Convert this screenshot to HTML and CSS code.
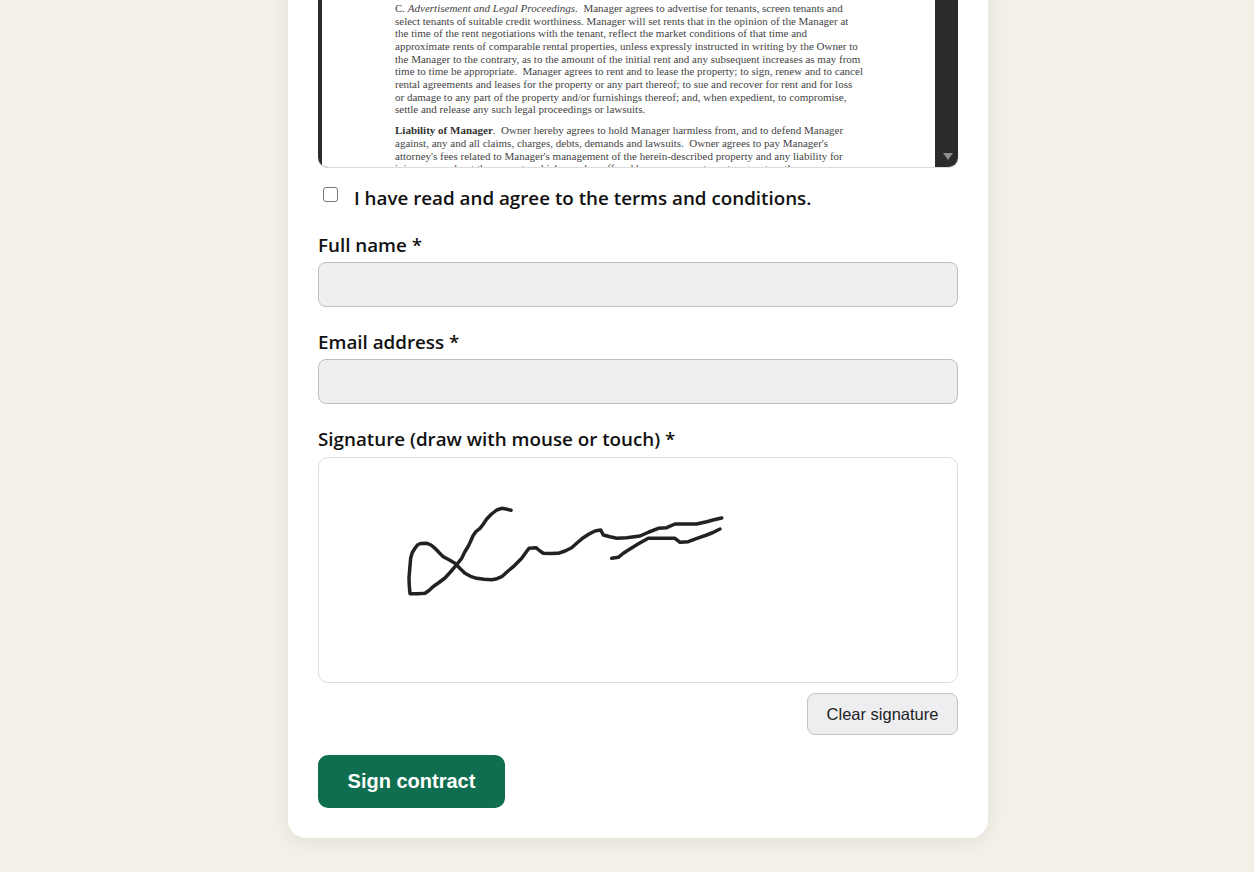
FILE: index.html
```html
<!DOCTYPE html>
<html lang="en">
<head>
    <meta charset="UTF-8">
    <meta name="viewport" content="width=device-width, initial-scale=1.0">
    <title>Sign contract</title>
    <link rel="stylesheet" href="styles.css">
</head>
<body>
    <div class="page">
        <form class="card">
            <div class="doc">
                <div class="doc-page">
                    <p>C. <i>Advertisement and Legal Proceedings.</i>&nbsp; Manager agrees to advertise for tenants, screen tenants and<br>
                    select tenants of suitable credit worthiness. Manager will set rents that in the opinion of the Manager at<br>
                    the time of the rent negotiations with the tenant, reflect the market conditions of that time and<br>
                    approximate rents of comparable rental properties, unless expressly instructed in writing by the Owner to<br>
                    the Manager to the contrary, as to the amount of the initial rent and any subsequent increases as may from<br>
                    time to time be appropriate.&nbsp; Manager agrees to rent and to lease the property; to sign, renew and to cancel<br>
                    rental agreements and leases for the property or any part thereof; to sue and recover for rent and for loss<br>
                    or damage to any part of the property and/or furnishings thereof; and, when expedient, to compromise,<br>
                    settle and release any such legal proceedings or lawsuits.</p>
                    <p><b>Liability of Manager</b>.&nbsp; Owner hereby agrees to hold Manager harmless from, and to defend Manager<br>
                    against, any and all claims, charges, debts, demands and lawsuits.&nbsp; Owner agrees to pay Manager's<br>
                    attorney's fees related to Manager's management of the herein-described property and any liability for<br>
                    injury on or about the property which may be suffered by any person, tenant or guest on the</p>
                </div>
                <div class="doc-scroll"><span class="arrow"></span></div>
            </div>

            <label class="agree">
                <input type="checkbox">
                <span>I have read and agree to the terms and conditions.</span>
            </label>

            <div class="field">
                <label for="fullname">Full name *</label>
                <input id="fullname" type="text">
            </div>
            <div class="field">
                <label for="email">Email address *</label>
                <input id="email" type="email">
            </div>
            <div class="field">
                <label>Signature (draw with mouse or touch) *</label>
                <div class="sig">
                    <svg viewBox="319 458 638 224" width="638" height="224">
                        <path d="M511 510.3 L506 509 L501.7 508.3 L496.7 510 L491 514.5 L486.7 519 L483 524.5 L480 528.3 L476 531.5 L473 535.7 L470.5 541.5 L468 546.7 L465 551.5 L461.7 558.3 L455 566.7 L450 572.5 L445 578 L439 582.5 L433 586.7 L429 590.5 L425 593.3 L418 593.8 L410 593.7 L409.3 586 L409 578 L409.8 568 L410.7 558 L412.3 552.5 L415 548.3 L417.5 545 L420.5 543.5 L427 543.3 L431 545 L435 548.3 L439 552.5 L443.3 556.7 L449 559.8 L455 563.3 L460 568.5 L465 573.3 L470.5 576.3 L476.7 578.3 L484 579.3 L491.7 579.7 L497 578.7 L501.7 576.7 L507.5 571.5 L513.3 566.7 L517.5 562.5 L521.7 558.3 L525.5 553 L529 548.3 L536 547.7 L540 551 L543.3 553.3 L550 553.6 L558.3 553.3 L565 551 L571.7 547.7 L577.5 542.5 L583.3 537.7 L589 534 L595 531 L600.7 530 L603.3 535 L610 536.8 L616.7 538.3 L626.7 537.7 L640 536 L649 532 L658.3 528.3 L666.7 527.7 L675 524 L686 524 L696.7 524 L706.7 521.7 L714 519.8 L721.7 518"/>
                        <path d="M611.7 558.3 L618.3 557.3 L623 553.5 L628.3 550 L638 544 L648.3 538.3 L662 538.3 L675 538.3 L680 542.3 L688.3 541.7 L697 538.3 L706.7 535 L713 532.5 L720 529"/>
                    </svg>
                </div>
            </div>
            <div class="sig-actions">
                <button type="button" class="btn-clear">Clear signature</button>
            </div>
            <button type="button" class="btn-sign">Sign contract</button>
        </form>
    </div>
</body>
</html>
```

FILE: styles.css
```css
*,*::after,*::before{
    box-sizing: border-box;
}
body{
    margin: 0;
    background-color: #f3f0e8;
    font-family: "Open Sans", "Noto Sans", sans-serif;
    color: #111;
    overflow: hidden;
}
/* page is scrolled to the bottom, so the card runs off the top */
.page{
    height: 872px;
    display: flex;
    flex-direction: column;
    justify-content: flex-end;
    align-items: center;
    padding: 0 0 34px 22px;
}
.card{
    width: 700px;
    padding: 0 30px 30px;
    background-color: #fff;
    border-radius: 0 0 18px 18px;
    box-shadow: 0 4px 20px rgba(0, 0, 0, .07);
}

/* contract viewer */
.doc{
    display: flex;
    height: 200px;
    background-color: #2b2b2b;
    border-bottom: 1px solid #ddd;
    border-radius: 0 0 10px 10px;
    padding-left: 4px;
    overflow: hidden;
}
.doc-page{
    flex: 1;
    padding: 34px 0 0 73px;
    background-color: #fff;
    overflow: hidden;
    font-family: "Liberation Serif", serif;
    font-size: 11px;
    line-height: 12.65px;
    color: #444;
    white-space: nowrap;
}
.doc-page p{
    margin: 0 0 8.5px;
}
.doc-page b{
    color: #333;
}
.doc-scroll{
    width: 23px;
    display: flex;
    justify-content: center;
    align-items: flex-end;
    padding: 0 0 7px 2px;
}
.arrow{
    width: 0;
    height: 0;
    border-left: 5px solid transparent;
    border-right: 5px solid transparent;
    border-top: 7px solid #8e8e8e;
}

.agree{
    display: flex;
    align-items: flex-start;
    gap: 16px;
    margin: 17px 0 20px 5px;
    font-size: 18.8px;
    font-weight: 600;
    line-height: 27px;
}
.agree input{
    width: 15px;
    height: 15px;
    margin: 2px 0 0;
    appearance: none;
    border: 1px solid #767676;
    border-radius: 3px;
    background-color: #fff;
}

.field{
    margin-bottom: 10px;
}
.field + .field{
    margin-top: 22px;
}
.field label{
    display: block;
    margin-bottom: 3px;
    font-size: 18.8px;
    font-weight: 600;
    line-height: 27px;
}
.field input{
    display: block;
    width: 100%;
    height: 45px;
    background-color: #efeff2;
    border: 1px solid #bdbdc2;
    border-radius: 8px;
}

.sig{
    height: 226px;
    margin-top: 4px;
    border: 1px solid #dcdcdc;
    border-radius: 10px;
    background-color: #fff;
}
.sig svg{
    display: block;
}
.sig path{
    fill: none;
    stroke: #222;
    stroke-width: 3.5;
    stroke-linejoin: round;
    stroke-linecap: round;
}
.sig-actions{
    display: flex;
    justify-content: flex-end;
    margin-bottom: 20px;
}
.btn-clear{
    width: 151px;
    height: 42px;
    background-color: #eeeef1;
    border: 1px solid #c4c4c8;
    border-radius: 8px;
    font-family: "Liberation Sans", sans-serif;
    font-size: 16.5px;
    color: #222;
}
.btn-sign{
    display: block;
    width: 187px;
    height: 53px;
    background-color: #0f6e4f;
    border: none;
    border-radius: 10px;
    font-family: "Liberation Sans", sans-serif;
    font-size: 20px;
    font-weight: bold;
    color: #fff;
}
```
